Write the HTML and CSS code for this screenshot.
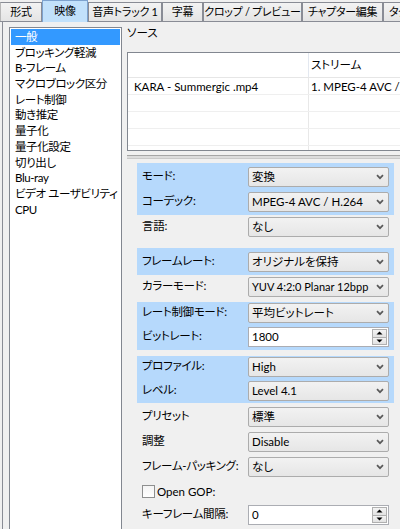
FILE: index.html
```html
<!DOCTYPE html>
<html lang="ja">
<head>
<meta charset="utf-8">
<title>映像</title>
<link rel="stylesheet" href="styles.css">
</head>
<body>
<div class="app">
  <div class="tabs">
    <div class="tab w1">形式</div>
    <div class="tab sel w2">映像</div>
    <div class="tab w3">音声トラック 1</div>
    <div class="tab w4">字幕</div>
    <div class="tab w5">クロップ / プレビュー</div>
    <div class="tab w6">チャプター編集</div>
    <div class="tab w7">タグ</div>
  </div>
  <div class="panel">
    <ul class="nav">
      <li class="active">一般</li>
      <li>ブロッキング軽減</li>
      <li>B-フレーム</li>
      <li>マクロブロック区分</li>
      <li>レート制御</li>
      <li>動き推定</li>
      <li>量子化</li>
      <li>量子化設定</li>
      <li>切り出し</li>
      <li>Blu-ray</li>
      <li>ビデオ ユーザビリティ</li>
      <li>CPU</li>
    </ul>
    <div class="main">
      <div class="src-label">ソース</div>
      <div class="table">
        <div class="thead"><div class="c1"></div><div class="c2">ストリーム</div></div>
        <div class="tr"><div class="c1">KARA - Summergic .mp4</div><div class="c2">1. MPEG-4 AVC / H.264</div></div>
        <div class="tr"><div class="c1"></div><div class="c2"></div></div>
        <div class="tr"><div class="c1"></div><div class="c2"></div></div>
        <div class="tr"><div class="c1"></div><div class="c2"></div></div>
        <div class="tr"><div class="c1"></div><div class="c2"></div></div>
      </div>
      <div class="splitter"></div>
      <div class="form">
        <div class="group blue g1">
          <div class="row"><span class="lbl">モード:</span><div class="combo"><span class="val">変換</span><svg class="chev" width="8" height="6" viewBox="0 0 8 6"><path d="M1 1.2 L4 4.2 L7 1.2" /></svg></div></div>
          <div class="row"><span class="lbl">コーデック:</span><div class="combo"><span class="val">MPEG-4 AVC / H.264</span><svg class="chev" width="8" height="6" viewBox="0 0 8 6"><path d="M1 1.2 L4 4.2 L7 1.2" /></svg></div></div>
        </div>
        <div class="row r-lang"><span class="lbl">言語:</span><div class="combo"><span class="val">なし</span><svg class="chev" width="8" height="6" viewBox="0 0 8 6"><path d="M1 1.2 L4 4.2 L7 1.2" /></svg></div></div>
        <div class="group blue g2">
          <div class="row"><span class="lbl">フレームレート:</span><div class="combo"><span class="val">オリジナルを保持</span><svg class="chev" width="8" height="6" viewBox="0 0 8 6"><path d="M1 1.2 L4 4.2 L7 1.2" /></svg></div></div>
        </div>
        <div class="row r-color"><span class="lbl">カラーモード:</span><div class="combo"><span class="val small">YUV 4:2:0 Planar 12bpp</span><svg class="chev" width="8" height="6" viewBox="0 0 8 6"><path d="M1 1.2 L4 4.2 L7 1.2" /></svg></div></div>
        <div class="group blue g3">
          <div class="row"><span class="lbl">レート制御モード:</span><div class="combo"><span class="val">平均ビットレート</span><svg class="chev" width="8" height="6" viewBox="0 0 8 6"><path d="M1 1.2 L4 4.2 L7 1.2" /></svg></div></div>
          <div class="row"><span class="lbl">ビットレート:</span><div class="spin"><span class="val">1800</span><div class="spin-btns"><div class="sb"><svg width="7" height="4" viewBox="0 0 7 4"><path d="M0.5 3.5 L3.5 0.5 L6.5 3.5 Z"/></svg></div><div class="sb"><svg width="7" height="4" viewBox="0 0 7 4"><path d="M0.5 0.5 L3.5 3.5 L6.5 0.5 Z"/></svg></div></div></div></div>
        </div>
        <div class="group blue g4">
          <div class="row"><span class="lbl">プロファイル:</span><div class="combo"><span class="val">High</span><svg class="chev" width="8" height="6" viewBox="0 0 8 6"><path d="M1 1.2 L4 4.2 L7 1.2" /></svg></div></div>
          <div class="row"><span class="lbl">レベル:</span><div class="combo"><span class="val">Level 4.1</span><svg class="chev" width="8" height="6" viewBox="0 0 8 6"><path d="M1 1.2 L4 4.2 L7 1.2" /></svg></div></div>
        </div>
        <div class="row r-preset"><span class="lbl">プリセット</span><div class="combo"><span class="val">標準</span><svg class="chev" width="8" height="6" viewBox="0 0 8 6"><path d="M1 1.2 L4 4.2 L7 1.2" /></svg></div></div>
        <div class="row r-next"><span class="lbl">調整</span><div class="combo"><span class="val">Disable</span><svg class="chev" width="8" height="6" viewBox="0 0 8 6"><path d="M1 1.2 L4 4.2 L7 1.2" /></svg></div></div>
        <div class="row r-next"><span class="lbl">フレーム-パッキング:</span><div class="combo"><span class="val">なし</span><svg class="chev" width="8" height="6" viewBox="0 0 8 6"><path d="M1 1.2 L4 4.2 L7 1.2" /></svg></div></div>
        <div class="row r-check"><span class="checkbox"></span><span class="check-lbl">Open GOP:</span></div>
        <div class="row r-check"><span class="lbl">キーフレーム間隔:</span><div class="spin"><span class="val">0</span><div class="spin-btns"><div class="sb"><svg width="7" height="4" viewBox="0 0 7 4"><path d="M0.5 3.5 L3.5 0.5 L6.5 3.5 Z"/></svg></div><div class="sb"><svg width="7" height="4" viewBox="0 0 7 4"><path d="M0.5 0.5 L3.5 3.5 L6.5 0.5 Z"/></svg></div></div></div></div>
      </div>
    </div>
  </div>
</div>
</body>
</html>
```
FILE: styles.css
```css
* { box-sizing: border-box; }
html, body { margin: 0; padding: 0; }
body {
  background: #f0f0f0;
  font-family: Lato, "Noto Sans CJK JP", sans-serif;
  font-size: 11.5px;
  font-feature-settings: "palt" 1;
  color: #000;
}
.app {
  width: 400px;
  height: 529px;
  overflow: hidden;
  background: #f0f0f0;
  display: flex;
  flex-direction: column;
}

/* tabs */
.tabs {
  display: flex;
  align-items: flex-end;
  height: 22px;
  flex: none;
  border-bottom: 1px solid #898c95;
  white-space: nowrap;
}
.tab {
  flex: none;
  height: 19px;
  line-height: 17px;
  text-align: center;
  font-size: 11px;
  letter-spacing: -0.3px;
  border: 1px solid #898c95;
  border-bottom: none;
  background: linear-gradient(#f3f3f3, #e4e4e4);
  overflow: hidden;
}
.tab.sel {
  height: 22px;
  line-height: 19px;
  margin-bottom: -1px;
  background: #c2e1fb;
  border-color: #7da2ce;
}
.w1 { width: 42px; border-left-color: #b8b8b8; }
.w2 { width: 46px; }
.w3 { width: 74px; }
.w4 { width: 41px; }
.w5 { width: 99px; }
.w6 { width: 81px; }
.w7 { width: 60px; text-align: left; padding-left: 5px; }

/* panel */
.panel {
  flex: 1;
  display: flex;
  margin-left: 2px;
  border-left: 1px solid #898c95;
  min-height: 0;
}
.nav {
  list-style: none;
  margin: 5px 0 0 6px;
  padding: 1px;
  width: 113px;
  height: 520px;
  flex: none;
  background: #fff;
  border: 1px solid #828790;
}
.nav li {
  height: 15.7px;
  line-height: 15px;
  padding-left: 4px;
  letter-spacing: -0.4px;
  white-space: nowrap;
}
.nav li.active {
  background: #3399ff;
  color: #fff;
}

.main {
  flex: 1;
  min-width: 0;
  overflow: hidden;
  display: flex;
  flex-direction: column;
}
.src-label {
  margin: 4px 0 0 5px;
  height: 14px;
  line-height: 14px;
}
.table {
  margin: 12px 0 0 5px;
  width: 300px;
  height: 99px;
  flex: none;
  background: #fff;
  border: 1px solid #828790;
  overflow: hidden;
}
.thead, .tr { display: flex; }
.thead {
  height: 25px;
  line-height: 24px;
  border-bottom: 1px solid #e6e6e6;
}
.tr {
  height: 17px;
  line-height: 17px;
  border-bottom: 1px solid #efefef;
}
.c1 {
  width: 181px;
  flex: none;
  padding-left: 6px;
  border-right: 1px solid #e8e8e8;
  white-space: nowrap;
  overflow: hidden;
}
.thead .c1 { border-right-color: #e3e8f0; }
.c2 {
  flex: 1;
  padding-left: 2px;
  white-space: nowrap;
}

.splitter {
  margin: 4px 0 0 5px;
  width: 300px;
  height: 4px;
  flex: none;
  border-top: 1px solid #a5a5a5;
  border-bottom: 1px solid #c9c9c9;
  background: #dcdcdc;
}

/* form */
.form {
  margin: 4px 0 0 15px;
  width: 257px;
  display: flex;
  flex-direction: column;
}
.group {
  display: flex;
  flex-direction: column;
}
.blue { background: #b6d9fc; }
.g1 { padding: 4px 0 3px; gap: 5px; }
.g2 { padding: 4px 0 3px; margin-top: 11px; }
.g3 { padding: 1px 0 3px; gap: 4px; margin-top: 5px; }
.g4 { padding: 1px 0 2px; gap: 4px; margin-top: 6px; }
.r-lang, .r-color { margin-top: 2px; }
.r-preset { margin-top: 4px; }
.r-next { margin-top: 5px; }
.r-check { margin-top: 4px; }

.row {
  display: flex;
  align-items: center;
  height: 20px;
  padding: 0 5px;
}
.lbl {
  width: 106px;
  flex: none;
  padding-bottom: 5px;
  letter-spacing: -0.3px;
  white-space: nowrap;
}
.combo {
  width: 141px;
  height: 20px;
  flex: none;
  display: flex;
  align-items: center;
  justify-content: space-between;
  padding: 0 4px 0 3px;
  border: 1px solid #acacac;
  border-radius: 2px;
  background: linear-gradient(#f2f2f2, #e6e6e6);
}
.val {
  white-space: nowrap;
  line-height: 18px;
}
.val.small { font-size: 11px; }
.chev path {
  fill: none;
  stroke: #5a5a5a;
  stroke-width: 1.7;
}
.spin {
  width: 141px;
  height: 20px;
  flex: none;
  display: flex;
  align-items: center;
  justify-content: space-between;
  padding: 1px 1px 1px 3px;
  border: 1px solid #abadb3;
  background: #fff;
}
.spin-btns {
  width: 15px;
  height: 100%;
  display: flex;
  flex-direction: column;
}
.sb {
  flex: 1;
  display: flex;
  align-items: center;
  justify-content: center;
  border: 1px solid #b0b0b0;
  background: linear-gradient(#f4f4f4, #e2e2e2);
}
.sb + .sb { border-top: none; }
.sb path { fill: #000; }
.checkbox {
  width: 13px;
  height: 13px;
  flex: none;
  border: 1px solid #8e8f8f;
  background: linear-gradient(#f4f4f4, #fff);
}
.check-lbl {
  margin-left: 2px;
  white-space: nowrap;
}
```
